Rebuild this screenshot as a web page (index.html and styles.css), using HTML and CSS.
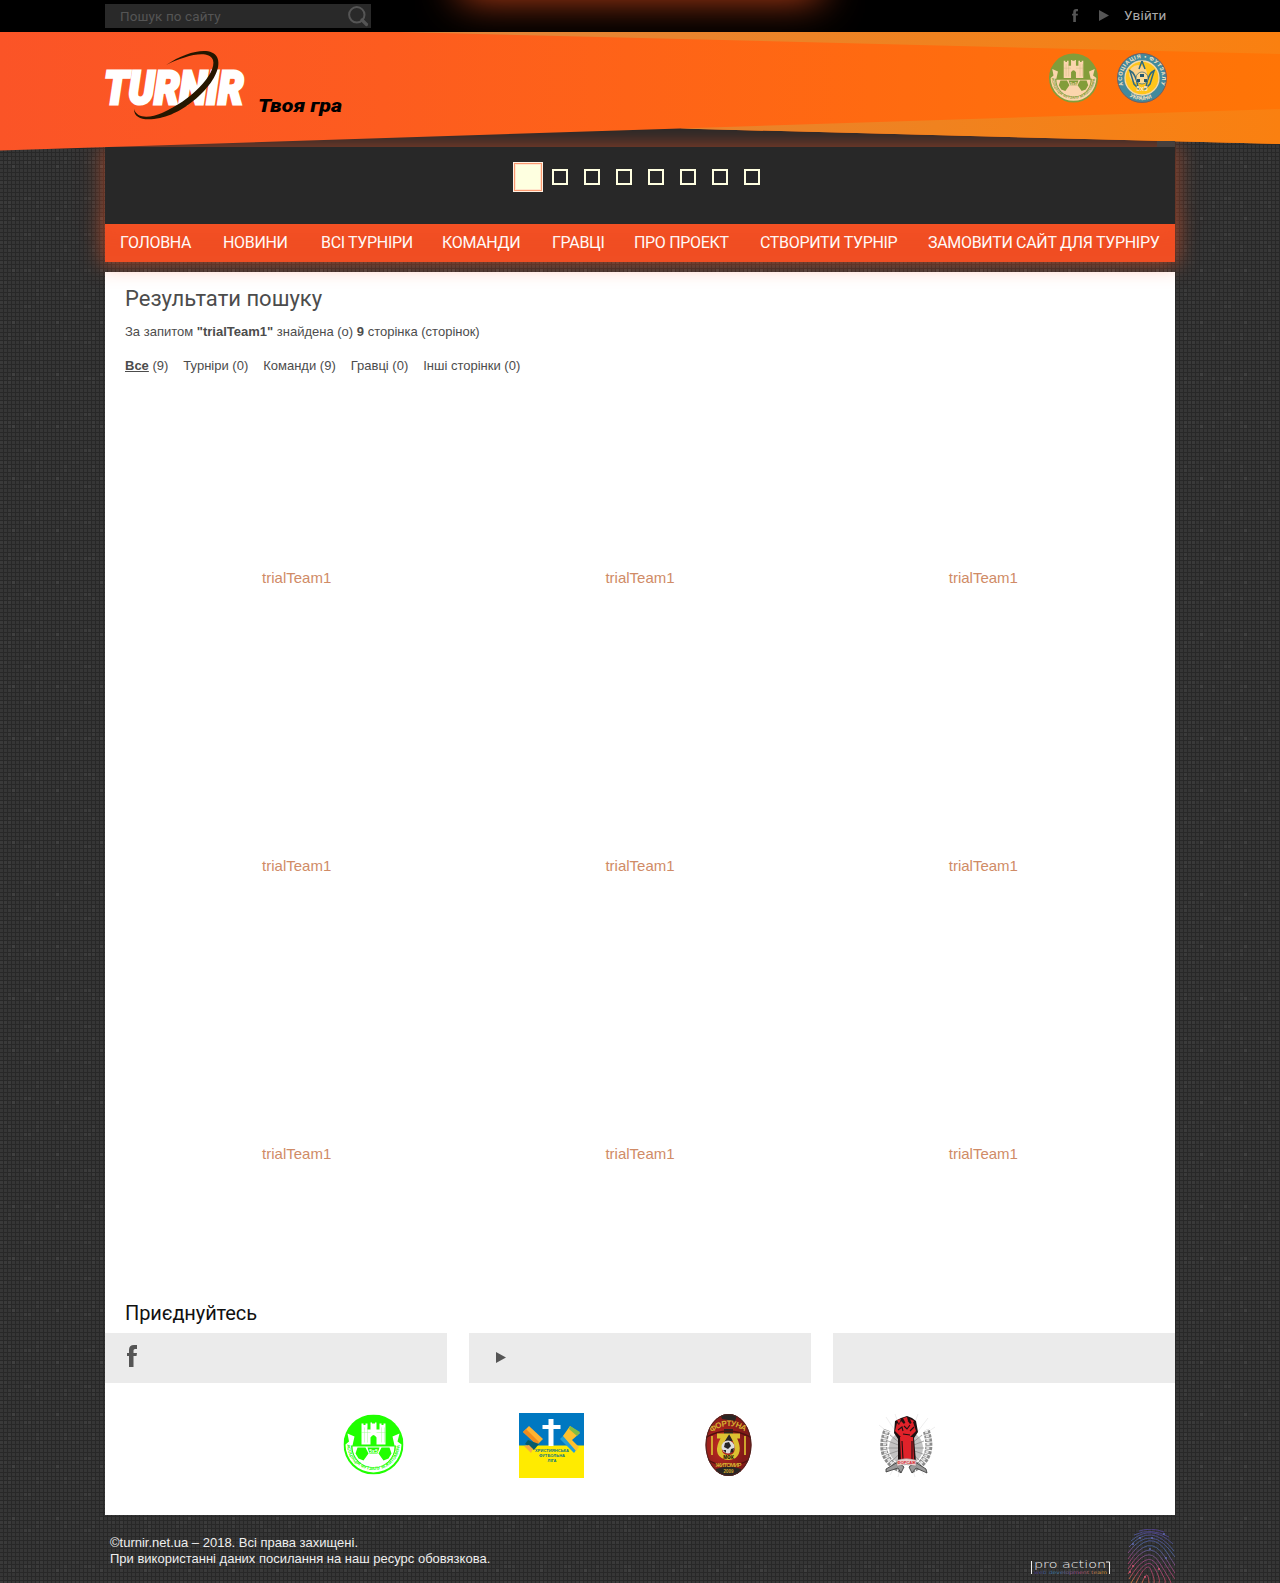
FILE: index.html
```html
<!DOCTYPE html>
<html lang="uk">
<head>
<meta charset="utf-8">
<title>Результати пошуку</title>
<link rel="stylesheet" href="styles.css">
</head>
<body>
<svg class="defs" width="0" height="0" aria-hidden="true">
  <defs>
    <symbol id="castle" viewBox="0 0 60 60">
      <circle cx="30" cy="30" r="30" fill="currentColor"/>
      <path class="paper" d="M4 19 L11 22 L9 31 A21.5 21.5 0 0 0 51 31 L49 22 L56 19 L54 27 L58 30 A28 28 0 0 1 2 30 L5.500 27 Z"/>
      <path fill="currentColor" d="M7.500 31 H52.500 A22.500 22.500 0 0 1 7.500 31Z"/>
      <path class="paper" d="M18 9h2v1.500h2V9h2v6h3V8h1.500v1h3V8H33v7h3V9h2v1.500h2V9h2v21H33v-7q-3-5-6 0v7H18Z"/>
      <path class="paper" d="M9 32H51A21 21 0 0 1 9 32Z"/>
      <path fill="currentColor" d="M14 33H22L25 39 20 46 15 44 12 39ZM46 33H38L35 39 40 46 45 44 48 39ZM24 33h12l-2 6h-8Z"/>
      <path d="M21 13v15M24 13v15M38 13v15M41 13v15M18 18h9M33 18h9" stroke="currentColor" stroke-width=".4" opacity=".5"/>
      <text class="paper tiny" x="30" y="38" font-size="5" text-anchor="middle">5х5</text>
      <path id="castle-arc" d="M3.500 29A26.500 26.500 0 0 0 56.500 29" fill="none"/>
      <text class="tiny" font-size="4.500" fill="currentColor" textLength="80"><textPath href="#castle-arc" startOffset="1">АСОЦІАЦІЯ ФУТЗАЛУ М.ЖИТОМИРА</textPath></text>
    </symbol>
    <symbol id="facebook" viewBox="0 0 10 22">
      <path fill="currentColor" d="M10 0v4H8Q6.500 4 6.500 5.500V8H10L9.500 11H6.500V22H2V11H0V8H2V5Q2 0 7 0Z"/>
    </symbol>
    <symbol id="play" viewBox="0 0 10 11"><path fill="currentColor" d="M0 0L10 5.500L0 11Z"/></symbol>
  </defs>
</svg>

<div class="topbar">
  <div class="wrap topbar-row">
    <form class="search">
      <input class="search-input" type="text" placeholder="Пошук по сайту">
      <svg class="search-icon" viewBox="0 0 21 21"><circle cx="8.800" cy="8.800" r="7.700" fill="none" stroke="currentColor" stroke-width="2"/><path d="M14 14L18.500 18.500" stroke="currentColor" stroke-width="3.200" stroke-linecap="round"/></svg>
    </form>
    <nav class="account">
      <svg class="account-fb"><use href="#facebook"/></svg>
      <svg class="account-play"><use href="#play"/></svg>
      <a class="login">Увійти</a>
    </nav>
  </div>
</div>

<header class="header">
  <svg class="header-band" viewBox="0 0 1280 120" preserveAspectRatio="none">
    <defs>
      <linearGradient id="band"><stop offset="0" stop-color="#fb5427"/><stop offset=".3" stop-color="#fd5c1f"/><stop offset=".68" stop-color="#ff6a11"/><stop offset="1" stop-color="#ff7506"/></linearGradient>
      <linearGradient id="ray" gradientUnits="userSpaceOnUse" x1="420" x2="1280" y1="0" y2="0"><stop offset="0" stop-color="#e0863d"/><stop offset=".6" stop-color="#f0821f"/><stop offset="1" stop-color="#fa8010"/></linearGradient>
    </defs>
    <path fill="url(#band)" d="M0 0H1280V112L680 96.500L0 118.500Z"/>
    <path fill="url(#ray)" d="M400 0H1280V22ZM680 96.500L1280 77V112Z"/>
  </svg>
  <div class="wrap header-row">
    <svg class="logo" viewBox="0 0 240 72">
      <text class="logo-name" transform="translate(-1 54) scale(.868 1)" font-size="46">TURNIR</text>
      <path class="logo-orbit" d="M61 15C82 1 106-4 112 7C121 25 85 62 55 68C40 71 29 69 29 59C32 69 45 68 57 63C85 51 112 24 108 10C103-1 80 6 61 15Z"/>
      <text class="logo-motto" x="153" y="62" font-size="19" textLength="84" lengthAdjust="spacingAndGlyphs">Твоя гра</text>
    </svg>
    <div class="partners">
      <svg class="partner-city"><use href="#castle"/></svg>
      <svg class="partner-ukraine" viewBox="0 0 50 50">
        <circle cx="25" cy="25" r="24.500" fill="#438a9d" stroke="#715f63"/>
        <circle cx="25" cy="25" r="17" fill="#ffc51b" stroke="#f4d9a9" stroke-width="1.300"/>
        <circle cx="21" cy="21" r="9" fill="#fbd28a"/>
        <path d="M25 8L22 16M25 8L28 16M12 17Q19 20 21 34M38 17Q31 20 29 34M13 18L17 31L23 37M37 18L33 31L27 37" fill="none" stroke="#2d6a80" stroke-width="1.500"/>
        <circle cx="25" cy="25" r="6" fill="#fbdb95" stroke="#35687a" stroke-width=".7"/>
        <path fill="#24566d" d="M23 21h4v3h-4ZM27 26h3v3h-3ZM20 26h3v3h-3Z"/>
        <text class="tiny" x="25" y="37.500" font-size="7" text-anchor="middle" fill="#fde4c0">5х5</text>
        <path id="ua-top" d="M7.500 35A20 20 0 1 1 42.500 35" fill="none"/>
        <path id="ua-bottom" d="M4.500 34.500A23 23 0 0 0 45.500 34.500" fill="none"/>
        <text class="tiny" font-size="5.500" fill="#fde4c0"><textPath href="#ua-top" startOffset="3" textLength="76">АСОЦІАЦІЯ • ФУТЗАЛУ</textPath></text>
        <text class="tiny" font-size="5.500" fill="#fde4c0"><textPath href="#ua-bottom" startOffset="12">УКРАЇНИ</textPath></text>
      </svg>
    </div>
    <i class="header-tab"></i>
  </div>
</header>

<div class="wrap slider">
  <i class="dot dot-active"></i><i class="dot"></i><i class="dot"></i><i class="dot"></i><i class="dot"></i><i class="dot"></i><i class="dot"></i><i class="dot"></i>
</div>
<nav class="wrap menu">
  <a>ГОЛОВНА</a><a>НОВИНИ</a><a>ВСІ ТУРНІРИ</a><a>КОМАНДИ</a><a>ГРАВЦІ</a><a>ПРО ПРОЕКТ</a><a>СТВОРИТИ ТУРНІР</a><a>ЗАМОВИТИ САЙТ ДЛЯ ТУРНІРУ</a>
</nav>

<main class="wrap content">
  <h1 class="title">Результати пошуку</h1>
  <p class="summary">За запитом <b>"trialTeam1"</b> знайдена (о) <b>9</b> сторінка (сторінок)</p>
  <div class="tabs">
    <span><b class="tab-current">Все</b> (9)</span><span>Турніри (0)</span><span>Команди (9)</span><span>Гравці (0)</span><span>Інші сторінки (0)</span>
  </div>
  <div class="teams">
    <a>trialTeam1</a><a>trialTeam1</a><a>trialTeam1</a>
    <a>trialTeam1</a><a>trialTeam1</a><a>trialTeam1</a>
    <a>trialTeam1</a><a>trialTeam1</a><a>trialTeam1</a>
  </div>
  <h2 class="join-title">Приєднуйтесь</h2>
  <div class="join">
    <div class="join-box"><svg class="join-fb"><use href="#facebook"/></svg></div>
    <div class="join-box"><svg class="join-play"><use href="#play"/></svg></div>
    <div class="join-box"></div>
  </div>
  <div class="clubs">
    <svg class="club club-city"><use href="#castle" x="2.500" y="1.500" width="60" height="60"/></svg>
    <svg class="club" viewBox="0 0 65 65">
      <path fill="#0078c1" d="M0 0H65V33H0Z"/><path fill="#ffeb00" d="M0 32.500H65V65H0Z"/>
      <path fill="#fff" d="M29.500 6h5v6h7v4h-7v17h-5V16h-6v-4h6Z"/>
      <path fill="#ffb331" d="M10 13L24 26L18 32L4 19Z"/><path fill="#f28b1c" d="M4 19L7 16L20 29L18 32Z"/>
      <path fill="#075c6b" d="M9 27L20 31L15 37L6 31Z"/><path fill="#f9a943" d="M5 33L10 32L14 36L12 40Z"/>
      <path fill="#249fd7" d="M41 26L46 21L58 36L55 40Z"/><path fill="#ffc12e" d="M51 13L61 20L53 27L60 34L57 38L44 23Z"/><path fill="#85bd42" d="M51 13L61 19L58 23L50 16Z"/>
      <g class="tiny" fill="#087385" font-size="4" text-anchor="middle"><text x="33" y="39" textLength="34">ХРИСТИЯНСЬКА</text><text x="33" y="44" textLength="26">ФУТБОЛЬНА</text><text x="33" y="49">ЛІГА</text></g>
    </svg>
    <svg class="club" viewBox="0 0 65 65">
      <defs><clipPath id="oval"><ellipse cx="32.500" cy="32" rx="23" ry="31"/></clipPath><radialGradient id="wine" cx=".35" cy=".5"><stop offset="0" stop-color="#c42a22"/><stop offset="1" stop-color="#811a18"/></radialGradient></defs>
      <g clip-path="url(#oval)">
        <path fill="url(#wine)" d="M9 0h47v64H9Z"/>
        <path fill="#292624" d="M24 0H42L39 8L26 6ZM20 56Q32 51 45 56V64H20ZM28 16h9v12h-9Z"/>
        <path d="M9 25Q32 11 56 25M9 45Q32 61 56 45" fill="none" stroke="#50120f" stroke-width="1.300"/>
        <path d="M16 23v19M49 23v19" stroke="#d8b52f" stroke-width="1.800"/>
        <path d="M21 23h8Q19 38 27 43Q32 46 38 43Q45 37 37 23h7" fill="none" stroke="#dcc131" stroke-width="5"/>
        <circle cx="32" cy="34" r="6.500" fill="#ddd"/><path d="M29 30l4-1 2 4-3 3-4-2ZM35 36l3-1-1 4-3 1ZM27 37l3 0 0 3Z" fill="#252525"/>
      </g>
      <ellipse cx="32.500" cy="32" rx="22.500" ry="30.500" fill="none" stroke="#4a2420"/>
      <path id="oval-top" d="M14 21Q32 5 52 21" fill="none"/>
      <g class="tiny" fill="#d5ad30"><text font-size="8" textLength="36"><textPath href="#oval-top" startOffset="2">ФОРТУНА</textPath></text>
      <text x="32.500" y="54" font-size="6" text-anchor="middle" textLength="26">ЖИТОМИР</text><text x="32.500" y="60" font-size="4.500" text-anchor="middle">2009</text></g>
      <text class="tiny" x="32.500" y="45.500" font-size="4.500" text-anchor="middle">МФК</text>
    </svg>
    <svg class="club" viewBox="0 0 65 65">
      <g stroke="#ddd" stroke-width=".5"><path d="M32 34L5 12M32 34L12 4M32 34L21 1M32 34L44 1M32 34L54 5M32 34L61 14M32 34L16 62M32 34L24 64M32 34L41 64M32 34L50 62"/></g>
      <circle cx="32" cy="35" r="17" fill="#c4c4c4"/>
      <path stroke="#888" stroke-width=".7" d="M32 35L16 22M32 35L14 28M32 35L14 35M32 35L15 41M32 35L48 22M32 35L50 28M32 35L50 35M32 35L49 41M32 35L19 47M32 35L45 47"/>
      <g fill="none" stroke="#8c8c8c" stroke-width="7" stroke-dasharray="3 1"><path d="M28 57Q2 46 13 17M37 57Q62 46 52 17"/></g>
      <path d="M28 57Q4 46 13 17M37 57Q60 46 52 17" fill="none" stroke="#e4e4e4" stroke-width="3" stroke-dasharray="2 2"/>
      <path d="M12 56L24 49L30 54L27 60L24 55L12 59ZM52 56L41 49L35 54L38 60L42 55L53 60Z" fill="#999" stroke="#333" stroke-width=".8"/>
      <path d="M24 26L20 20L21 8L27 5L33 3L38 5L42 8L44 19L40 25L42 49H24Z" fill="#1e1011"/>
      <path d="M26 24h13l1 24H27ZM21 18l2-8 2 2 2-4 3 3 3-4 3 4 3-2 3 9-6 6h-9ZM23 7l4-1-2 5ZM29 5l4-1 1 4-3 1ZM36 6l4 2-2 3Z" fill="#e0222a"/>
      <path d="M24 17l4-3 1 4M30 13l3 3 3-4M36 18l4-4M29 21l7 1M28 28l1 18M38 28v18" stroke="#1e1011" stroke-width="1.100" fill="none"/>
      <path d="M23 47Q32 44 42 47V53Q32 50 23 53Z" fill="#ead3d1" stroke="#777" stroke-width=".4"/><text class="tiny" x="32.500" y="51" text-anchor="middle" font-size="4" fill="#d62731">ФОРСАЖ</text>
    </svg>
  </div>
</main>

<footer class="wrap footer">
  <p class="copyright">©turnir.net.ua – 2018. Всі права захищені.<br>При використанні даних посилання на наш ресурс обовязкова.</p>
  <svg class="studio" viewBox="0 0 145 54">
    <defs>
      <linearGradient id="rainbow-y" gradientUnits="userSpaceOnUse" x1="124" y1="0" x2="108" y2="58"><stop offset="0" stop-color="#51408a"/><stop offset=".3" stop-color="#496398"/><stop offset=".55" stop-color="#93447b"/><stop offset=".8" stop-color="#b4445d"/><stop offset="1" stop-color="#d48b2d"/></linearGradient>
      <linearGradient id="rainbow-x"><stop offset="0" stop-color="#47327a"/><stop offset=".3" stop-color="#397ca6"/><stop offset=".6" stop-color="#a24688"/><stop offset="1" stop-color="#dda32a"/></linearGradient>
    </defs>
    <path d="M1.500 32V45M76 33h3.500V45" fill="none" stroke="#eee"/>
    <text class="studio-name" x="4" y="39" font-size="10.500" textLength="72" lengthAdjust="spacingAndGlyphs">pro action</text>
    <text class="studio-note" x="4" y="45" font-size="4.500" textLength="73" lengthAdjust="spacingAndGlyphs" fill="url(#rainbow-x)">web development team</text>
    <g fill="none" stroke="url(#rainbow-y)" stroke-width=".9">
      <path d="M109 2Q121-2 134 3M104 6Q121-2 139 8M101 12Q121-6 143 15M99 18Q121-8 144 22M98 24Q121-8 145 28M98 30Q120-4 138 25T145 36M98 35Q119 2 135 28T145 43M98 40Q118 8 132 30T145 50M98 45Q117 14 129 33T141 54M99 50Q117 20 127 36T135 54M101 54Q117 26 124 38T129 54M106 54Q117 31 121 41T124 54M112 54Q118 38 119 54"/>
    </g>
    <g fill="#6470bd"><circle cx="110" cy="9" r=".9"/><circle cx="122" cy="9" r=".9"/><circle cx="134" cy="5" r=".9"/><circle cx="103" cy="15" r=".9"/><circle cx="120" cy="20" r=".9"/><circle cx="136" cy="29" r=".9"/></g>
    <g fill="#e05c78"><circle cx="103" cy="37" r=".9"/><circle cx="100" cy="43" r=".9"/><circle cx="115" cy="48" r=".9"/><circle cx="129" cy="40" r=".9"/></g>
  </svg>
</footer>
</body>
</html>
```
FILE: styles.css
```css
* { box-sizing: border-box; }

body {
  margin: 0;
  height: 1583px;
  overflow: hidden;
  color: #4c4c4c;
  font: 13px/16px "Liberation Sans", Arial, sans-serif;
  background-color: #363636;
  background-image:
    linear-gradient(#282828 1px, transparent 1px),
    linear-gradient(90deg, transparent 3px, #282828 3px),
    conic-gradient(from 0deg at 4px 4px, transparent 75%, #404040 75%),
    conic-gradient(from 0deg at 8px 4px, transparent 75%, #3c3c3c 75%),
    conic-gradient(from 0deg at 4px 8px, transparent 75%, #3b3b3b 75%),
    conic-gradient(from 0deg at 8px 4px, transparent 75%, #3a3a3a 75%);
  background-size: 4px 4px, 4px 4px, 44px 52px, 60px 36px, 28px 44px, 36px 20px;
  background-position: 0 0, 0 0, 12px 8px, 24px 16px, 8px 24px, 0 0;
}

p, h1, h2 { margin: 0; }
.defs { position: absolute; }
.wrap { width: 1070px; margin: 0 auto; }
.tiny { font-family: "Liberation Sans", Arial, sans-serif; font-weight: bold; }
.paper { fill: var(--paper); }

.topbar { height: 32px; background: #000; position: relative; overflow: hidden; }
.topbar::before {
  content: "";
  position: absolute;
  left: 480px;
  top: -31px;
  width: 320px;
  height: 10px;
  box-shadow: 0 0 40px 20px #c44318;
}
.topbar-row { position: relative; height: 32px; display: flex; align-items: center; justify-content: space-between; }
.search { width: 266px; height: 24px; padding: 0 2px 0 15px; display: flex; align-items: center; justify-content: space-between; background: #292929; }
.search-input {
  width: 180px;
  padding: 0;
  border: 0;
  background: none;
  font: 13.5px/20px Roboto, sans-serif;
  letter-spacing: .1px;
}
.search-input::placeholder { color: #555; }
.search-icon { width: 21px; height: 21px; color: #555; }
.account { display: flex; align-items: center; padding: 0 9px 2px 0; color: #555; }
.account-fb { width: 6px; height: 13px; margin-right: 21px; }
.account-play { width: 10px; height: 11px; margin-right: 15px; }
.login { width: 42px; font: 13.5px/16px Roboto, sans-serif; color: #aaa; letter-spacing: .2px; white-space: nowrap; }

.header { position: relative; height: 115px; }
.header-band { position: absolute; z-index: 2; left: 0; top: 0; width: 100%; height: 120px; }
.header-row { height: 115px; display: flex; justify-content: space-between; background: #282828; }
.logo { position: relative; z-index: 3; width: 240px; height: 72px; margin-top: 18px; overflow: visible; }
.logo-name { font-family: Roboto, sans-serif; font-weight: 900; font-style: italic; fill: #fff; stroke: #fff; stroke-width: 3; }
.logo-orbit { fill: #251700; }
.logo-motto { font-family: Roboto, sans-serif; font-weight: 900; font-style: italic; fill: #000; }
.partners { position: relative; z-index: 3; display: flex; gap: 19px; padding: 21px 8px 0 0; }
.partner-city { width: 49px; height: 50px; color: #829d3a; --paper: #fbd5ad; }
.partner-ukraine { width: 50px; height: 50px; }
.header-tab { position: absolute; right: 105px; bottom: 0; z-index: 2; width: 18px; height: 6px; background: #463f3d; }

.slider { position: relative; z-index: 1; height: 77px; display: flex; justify-content: center; gap: 16px; padding: 22px 0 0; background: #282828; box-shadow: 0 0 20px 2px rgba(255, 90, 40, .5); }
.dot { width: 16px; height: 16px; border: 2px solid #ffffe0; }
.dot-active { width: 30px; height: 30px; margin: -7px -7px 0; border: 1px solid #fff0e2; background: #feffe0; box-shadow: inset 0 0 0 1px #fb9a70, inset 0 0 0 2px #ffe6cd; }

.menu {
  position: relative;
  height: 38px;
  padding-left: 15px;
  display: grid;
  grid-template-columns: 103px 98px 121px 110px 82px 126px 168px auto;
  background: #f04e23;
  box-shadow: 0 0 20px 3px rgba(255, 90, 40, .5);
  color: #fff;
  font: 16px/37px Roboto, sans-serif;
  letter-spacing: -.32px;
  white-space: nowrap;
}

.content { height: 1243px; margin-top: 10px; background: #fff; }
.title { padding: 13px 20px 0; font: 22px/28px Roboto, sans-serif; }
.summary { padding: 11px 20px 0; }
.tabs { display: flex; gap: 15px; padding: 18px 20px 0; }
.tab-current { text-decoration: underline; }
.teams { display: grid; grid-template: repeat(3, 288px) / repeat(3, 1fr); margin: 65px 20px 0; padding-top: 130px; color: #d08b66; text-align: center; font-size: 15px; line-height: 18px; }
.join-title { padding: 0 20px; margin-top: -134px; color: #111; font: 20px/28px Roboto, sans-serif; letter-spacing: -.1px; }
.join { display: grid; grid-template-columns: repeat(3, 342px); gap: 22px; margin-top: 6px; }
.join-box { height: 50px; background: #ebebeb; color: #555; }
.join-fb { display: block; width: 10px; height: 22px; margin: 12px 22px; }
.join-play { display: block; width: 10px; height: 11px; margin: 19px 27px; }
.clubs { display: flex; justify-content: center; gap: 112.5px; margin-top: 30px; }
.club { width: 65px; height: 65px; }
.club-city { color: #20ff00; --paper: #fff; }

.footer { display: flex; justify-content: space-between; height: 68px; color: #eee; }
.copyright { padding: 20px 5px 0; }
.studio { width: 145px; height: 54px; margin-top: 14px; }
.studio-name { font-family: "DejaVu Sans", sans-serif; font-weight: 200; fill: #eee; }
.studio-note { font-family: "DejaVu Sans", sans-serif; }
```
